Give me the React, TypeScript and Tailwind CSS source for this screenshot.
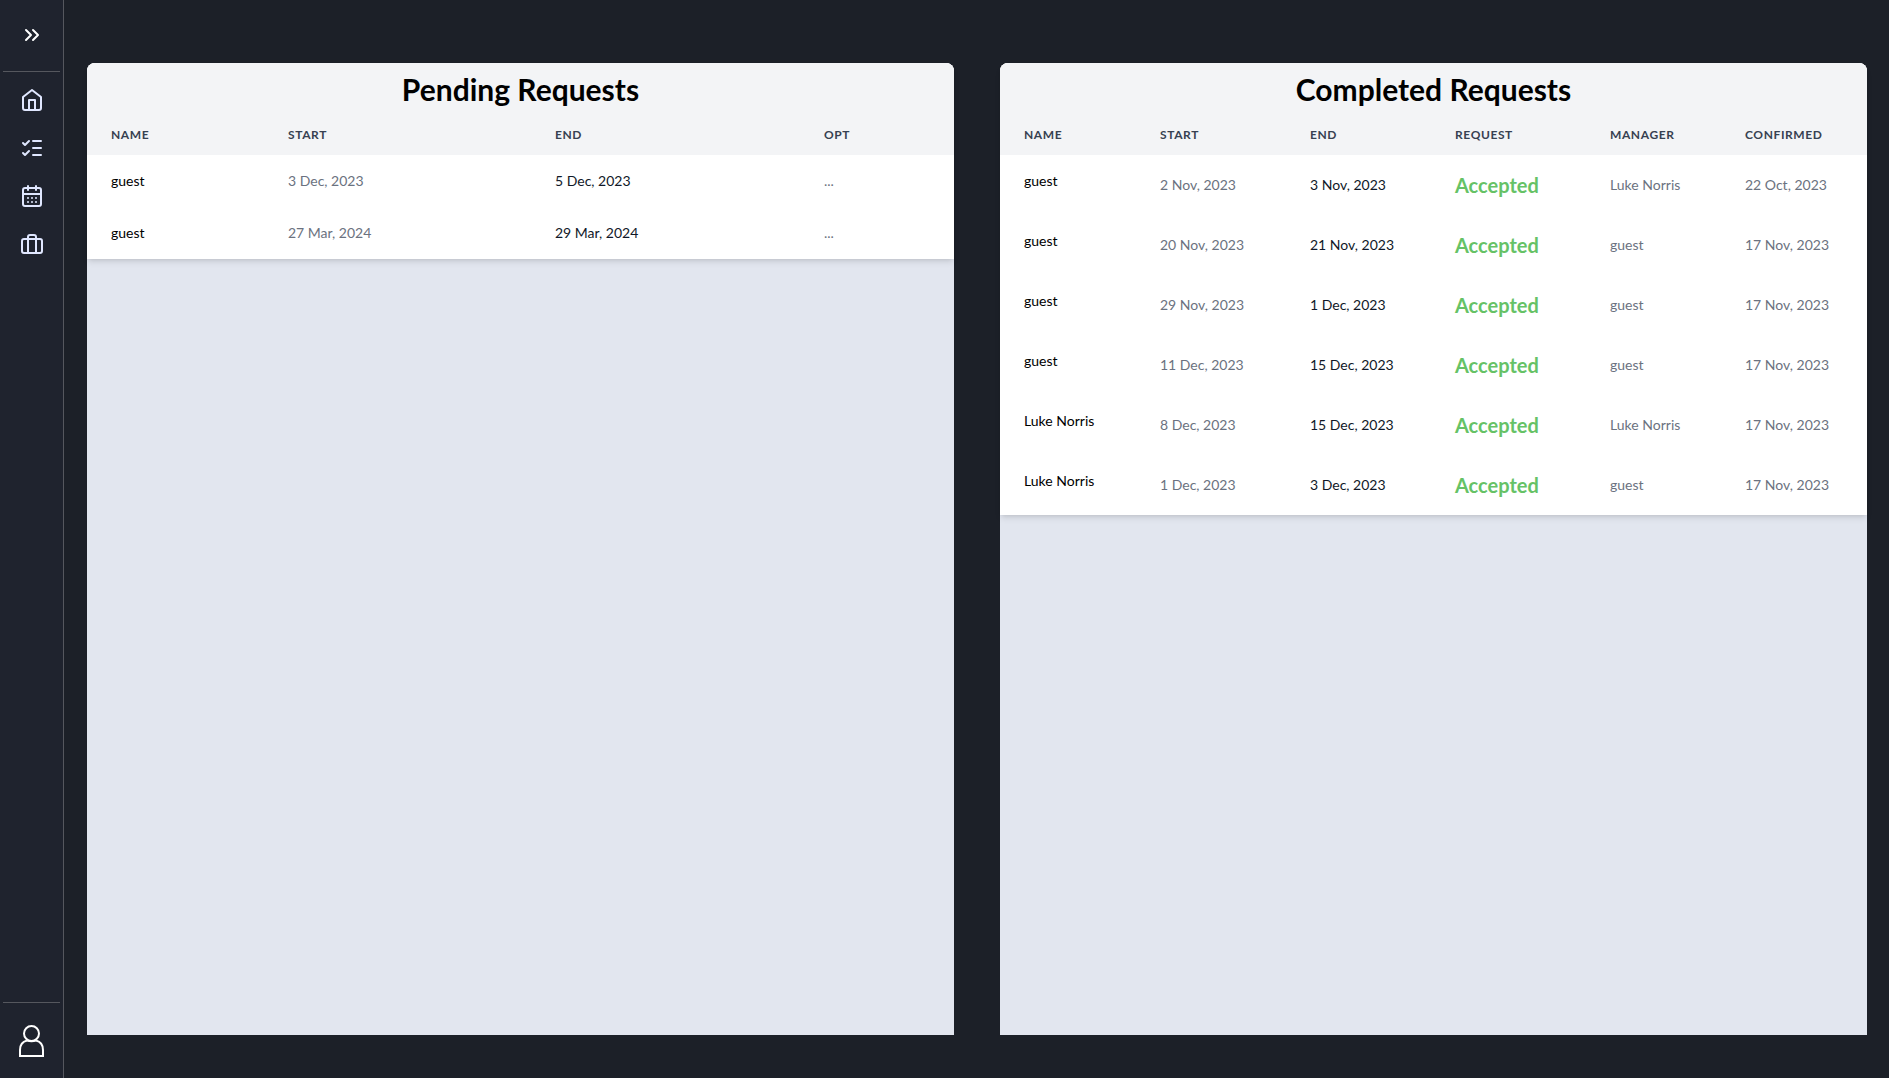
import type { ReactNode } from 'react';
import { CalendarDays, ChevronsRight, ListChecks } from 'lucide-react';
import { FiBriefcase } from 'react-icons/fi';

type PendingRequest = { name: string; start: string; end: string };
type CompletedRequest = PendingRequest & { status: string; manager: string; confirmed: string };

const pending: PendingRequest[] = [
  { name: 'guest', start: '3 Dec, 2023', end: '5 Dec, 2023' },
  { name: 'guest', start: '27 Mar, 2024', end: '29 Mar, 2024' },
];

const completed: CompletedRequest[] = [
  { name: 'guest', start: '2 Nov, 2023', end: '3 Nov, 2023', status: 'Accepted', manager: 'Luke Norris', confirmed: '22 Oct, 2023' },
  { name: 'guest', start: '20 Nov, 2023', end: '21 Nov, 2023', status: 'Accepted', manager: 'guest', confirmed: '17 Nov, 2023' },
  { name: 'guest', start: '29 Nov, 2023', end: '1 Dec, 2023', status: 'Accepted', manager: 'guest', confirmed: '17 Nov, 2023' },
  { name: 'guest', start: '11 Dec, 2023', end: '15 Dec, 2023', status: 'Accepted', manager: 'guest', confirmed: '17 Nov, 2023' },
  { name: 'Luke Norris', start: '8 Dec, 2023', end: '15 Dec, 2023', status: 'Accepted', manager: 'Luke Norris', confirmed: '17 Nov, 2023' },
  { name: 'Luke Norris', start: '1 Dec, 2023', end: '3 Dec, 2023', status: 'Accepted', manager: 'guest', confirmed: '17 Nov, 2023' },
];

function HomeIcon() {
  return (
    <svg width="24" height="24" viewBox="0 0 24 24" fill="none" stroke="currentColor" strokeWidth="2" strokeLinecap="round" strokeLinejoin="round">
      <path d="m3 9 9-7 9 7v11a2 2 0 0 1-2 2H5a2 2 0 0 1-2-2z" />
      <path d="M9 22V12h6v10" />
    </svg>
  );
}

function PersonIcon() {
  return (
    <svg width="26" height="32" viewBox="0 0 26 32" fill="none" stroke="currentColor" strokeWidth="2">
      <circle cx="12.5" cy="8.5" r="7.5" />
      <path d="M8 15.500C4 16.500 1 20 1 25v6h23v-6c0-5-3-8.500-7-9.500" />
      <path d="M8 15.500q4.500 1.500 9 0" />
    </svg>
  );
}

const links = [
  { label: 'Home', icon: <HomeIcon /> },
  { label: 'Tasks', icon: <ListChecks size={24} /> },
  { label: 'Calendar', icon: <CalendarDays size={24} /> },
  { label: 'Requests', icon: <FiBriefcase size={24} /> },
];

function Sidebar() {
  return (
    <aside className="flex w-16 shrink-0 flex-col border-r border-[#55575e] bg-[#1f232e] px-[3px]">
      <div className="flex h-[72px] justify-center border-b border-[#55575e] pt-[23px]">
        <button type="button" aria-label="Expand sidebar" className="h-6 text-white">
          <ChevronsRight size={24} />
        </button>
      </div>
      <nav className="flex flex-1 flex-col items-center gap-6 pt-4 text-indigo-100">
        {links.map((link) => (
          <a key={link.label} href="#" aria-label={link.label}>
            {link.icon}
          </a>
        ))}
      </nav>
      <div className="flex h-[76px] justify-center border-t border-[#55575e] pt-[22px]">
        <button type="button" aria-label="Profile" className="h-8 text-white">
          <PersonIcon />
        </button>
      </div>
    </aside>
  );
}

function Panel({ title, columns, widths, children }: { title: string; columns: string[]; widths: string[]; children: ReactNode }) {
  return (
    <section className="rounded-t-lg bg-[#e2e6ef]">
      <div className="overflow-hidden rounded-t-lg bg-white shadow-md">
        <h1 className="bg-gray-100 py-2 text-center text-3xl font-bold text-black">{title}</h1>
        <table className="w-full table-fixed text-left text-sm text-[#6b7280]">
          <colgroup>
            {widths.map((w, i) => (
              <col key={i} className={w} />
            ))}
          </colgroup>
          <thead className="bg-gray-100 text-xs tracking-wider text-[#374151] uppercase">
            <tr>
              {columns.map((column) => (
                <th key={column} scope="col" className="px-6 py-3 font-bold">
                  {column}
                </th>
              ))}
            </tr>
          </thead>
          <tbody>{children}</tbody>
        </table>
      </div>
    </section>
  );
}

export default function App() {
  return (
    <div className="flex min-h-screen bg-[#1c2028] font-['Lato',sans-serif]">
      <Sidebar />
      <main className="grid flex-1 grid-cols-2 gap-[46px] pt-[63px] pr-[22px] pb-[43px] pl-[23px]">
        <Panel
          title="Pending Requests"
          columns={['Name', 'Start', 'End', 'Opt']}
          widths={['w-[177px]', 'w-[267px]', 'w-[269px]', 'w-[154px]']}
        >
          {pending.map((r, i) => (
            <tr key={i}>
              <td className="px-6 py-4 align-top text-black">{r.name}</td>
              <td className="px-6 py-4">{r.start}</td>
              <td className="px-6 py-4 text-gray-900">{r.end}</td>
              <td className="px-6 py-4">
                <button type="button" className="block">...</button>
              </td>
            </tr>
          ))}
        </Panel>
        <Panel
          title="Completed Requests"
          columns={['Name', 'Start', 'End', 'Request', 'Manager', 'Confirmed']}
          widths={['w-[136px]', 'w-[150px]', 'w-[145px]', 'w-[155px]', 'w-[135px]', 'w-[146px]']}
        >
          {completed.map((r, i) => (
            <tr key={i}>
              <td className="px-6 py-4 align-top text-black">{r.name}</td>
              <td className="px-6 py-4">{r.start}</td>
              <td className="px-6 py-4 text-gray-900">{r.end}</td>
              <td className="px-6 py-4 text-xl font-bold text-[#66c266]">{r.status}</td>
              <td className="px-6 py-4">{r.manager}</td>
              <td className="px-6 py-4">{r.confirmed}</td>
            </tr>
          ))}
        </Panel>
      </main>
    </div>
  );
}
